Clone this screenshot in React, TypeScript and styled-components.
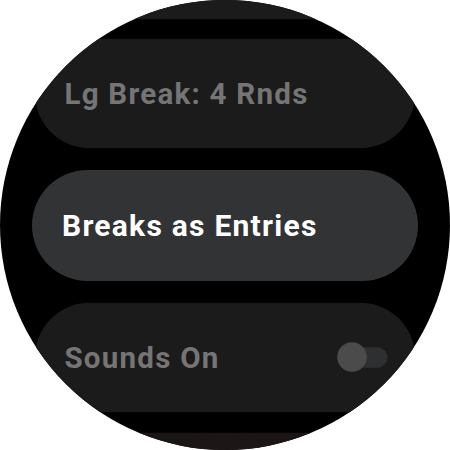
import React from "react";
import styled, { createGlobalStyle } from "styled-components";

const GlobalStyle = createGlobalStyle`
  html, body {
    margin: 0;
    padding: 0;
    background: #ffffff;
  }

  * {
    box-sizing: border-box;
  }
`;

const Screen = styled.div`
  width: 450px;
  height: 450px;
  border-radius: 50%;
  overflow: hidden;
  background: #000000;
  font-family: Roboto, "Liberation Sans", sans-serif;
`;

// list is scrolled so the previous chip only peeks in at the top
const ChipList = styled.div`
  margin-top: -94px;
  padding: 0 32px;
  display: flex;
  flex-direction: column;
  gap: 21px;
`;

type ChipPlace = "center" | "near" | "top" | "bottom";

const chipTransform: Record<ChipPlace, string> = {
  center: "none",
  near: "scale(0.985)",
  top: "translateY(4px) scale(0.97)",
  bottom: "translateY(-3px) scale(0.97)",
};

const Chip = styled.div<{ $place: ChipPlace; $active?: boolean; $tint?: boolean }>`
  height: 111px;
  padding: 0 28px 0 30px;
  border-radius: 56px;

  display: flex;
  align-items: center;
  justify-content: space-between;

  background: ${(p) =>
    p.$tint
      ? "linear-gradient(90deg, #151414 0%, #1d1616 50%, #171414 100%)"
      : p.$active
        ? "#323335"
        : "#1b1b1b"};
  transform: ${(p) => chipTransform[p.$place]};
`;

const Label = styled.span<{ $active?: boolean }>`
  font-size: 30px;
  font-weight: 700;
  letter-spacing: 1.25px;
  color: ${(p) => (p.$active ? "#ffffff" : "#757575")};
  white-space: nowrap;
`;

const Toggle = styled.div`
  position: relative;
  width: 51px;
  height: 21px;
  border-radius: 11px;
  background: #2e2f31;
  flex-shrink: 0;
`;

const Thumb = styled.div`
  position: absolute;
  left: 0;
  top: -5px;
  width: 30px;
  height: 30px;
  border-radius: 50%;
  background: #4b4b4b;
`;

export default function App() {
  return (
    <>
      <GlobalStyle />
      <Screen>
        <ChipList>
          <Chip $place="top" />
          <Chip $place="near">
            <Label>Lg Break: 4 Rnds</Label>
          </Chip>
          <Chip $place="center" $active>
            <Label $active>Breaks as Entries</Label>
          </Chip>
          <Chip $place="near">
            <Label>Sounds On</Label>
            <Toggle>
              <Thumb />
            </Toggle>
          </Chip>
          <Chip $place="bottom" $tint />
        </ChipList>
      </Screen>
    </>
  );
}
